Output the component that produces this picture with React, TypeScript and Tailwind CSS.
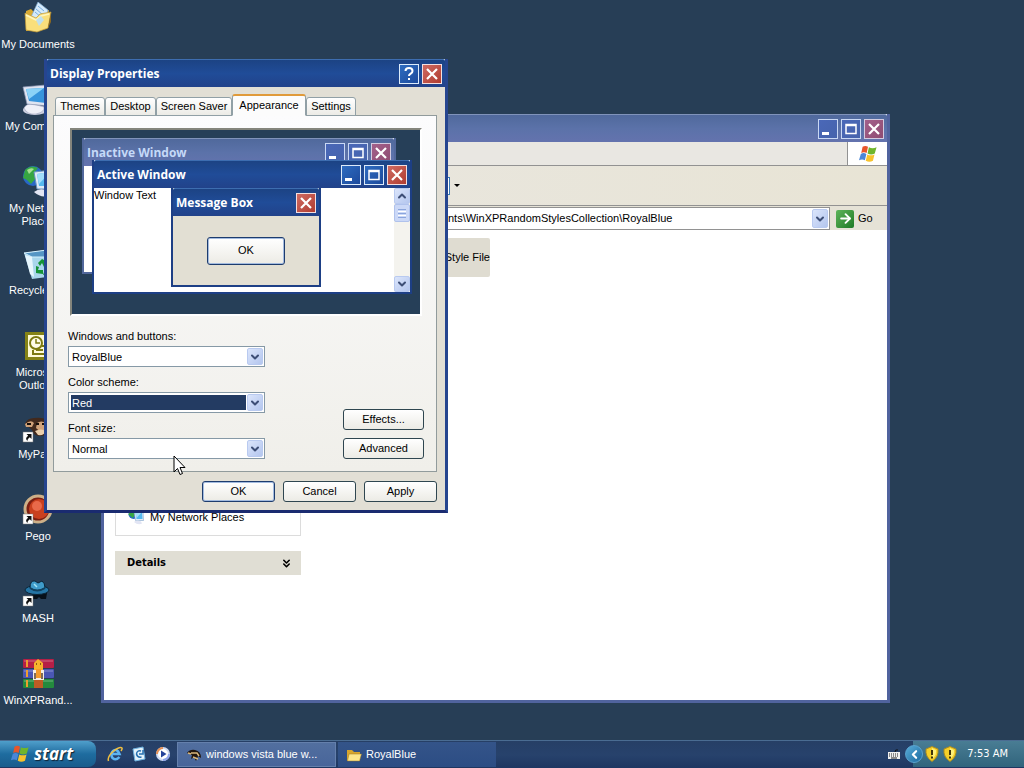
import React, { useState } from 'react';
import { ChevronDown, ChevronLeft, ChevronUp, ChevronsDown, ArrowRight } from 'lucide-react';

const Flag = ({ className }: { className: string }) => (
  <svg viewBox="0 0 22 20" className={className}>
    <path d="M5 2 Q8 0 11 2 L9.500 9 Q6.500 7 3.500 9 Z" fill="#e8562a" />
    <path d="M12 2.500 Q16 4.500 20.500 2.500 L18.500 9.500 Q14.500 11.500 10.500 9.500 Z" fill="#6fb52c" />
    <path d="M3 10 Q6 8 9.200 10 L7.500 17 Q4.500 15 1 17 Z" fill="#4a86d8" />
    <path d="M10.200 10.500 Q14 12.500 18.200 10.500 L16.500 17.500 Q12.500 19.500 8.500 17.500 Z" fill="#f7c22c" />
  </svg>
);

const Shortcut = () => (
  <g>
    <rect x="1" y="20" width="10" height="10" fill="#fff" stroke="#777" strokeWidth=".5" />
    <path d="M4.500 22 h5 v5 l-1.700 -1.700 q-2.500 1.500 -2.500 3.700 q-2.800 -3 .900 -5.300 Z" fill="#111" />
  </g>
);

const DocumentsIcon = () => (
  <svg viewBox="0 0 32 32" className="size-8">
    <path d="M4 9 L9 7 L12 10 L27 8 L25 27 L4 29 Z" fill="#d9aa33" />
    <path d="M16 0 L26 8 L23 20 L9 15 Z" fill="#d5eafb" stroke="#82add3" strokeWidth=".7" />
    <path d="M16 4 l6 5 M14 7 l7 6 M13 10 l6 5" stroke="#77aee0" strokeWidth="1" />
    <path d="M3 11 L14 16 L18 12 L29 10 L26 26 L15 30 L4 28 Z" fill="#f9df7c" stroke="#c39a35" strokeWidth=".7" />
    <path d="M4 13 L14 18 L19 14 L27 12" fill="none" stroke="#fff5bd" strokeWidth="1.500" />
    <path d="M14 18 l5 -4 3 4 -5 6 Z" fill="#bfe0ef" />
    <path d="M26 26 L29 10 L29 20 Z" fill="#8b6820" />
  </svg>
);

const ComputerIcon = () => (
  <svg viewBox="0 0 32 32" className="size-8">
    <ellipse cx="13" cy="26" rx="12" ry="5" fill="#cdd0e0" />
    <path d="M2 24 q3 -5 9 -4 l11 3 q1 5 -8 7 q-9 1 -12 -6" fill="#eff0f8" stroke="#9ea3bd" strokeWidth=".6" />
    <path d="M1 3 L24 1 L27 22 L5 20 Z" fill="#dfe4f1" stroke="#8d97b5" strokeWidth=".7" />
    <path d="M4 5 L22 4 L24 19 L7 17 Z" fill="#3694dc" />
    <path d="M4 5 L22 4 L7 15 Z" fill="#8bd2f7" />
  </svg>
);

const NetworkIcon = () => (
  <svg viewBox="0 0 32 32" className="size-full">
    <circle cx="11" cy="10" r="10" fill="#2868c8" />
    <path d="M3 4 Q9 -2 16 2 L12 7 L15 11 L9 18 L5 14 L1 12 Z" fill="#36a642" />
    <path d="M5 4 q4 -3 7 -1 l-5 5 Z" fill="#a4df91" />
    <path d="M12 6 L30 4 L31 23 L15 23 Z" fill="#dfebf8" stroke="#6793bf" />
    <path d="M15 8 L28 6 L29 20 L17 20 Z" fill="#55b9ef" />
    <path d="M15 8 L28 6 L17 18 Z" fill="#a1ddfa" />
    <path d="M12 26 q6 -5 14 -1 l2 4 q-8 4 -16 -3" fill="#e2e5f4" />
  </svg>
);

const RecycleIcon = () => (
  <svg viewBox="0 0 32 32" className="size-8">
    <path d="M2 5 L25 2 L29 9 L25 29 L10 31 Z" fill="#a9d6ec" />
    <path d="M2 5 L25 2 L29 9 L10 9 Z" fill="#5595c4" stroke="#d5effb" />
    <path d="M3 7 L10 9 L12 29 L8 26 Z" fill="#e7f6fd" />
    <path d="M16 15 l4 -4 6 3 -3 1 2 4 -3 0 -2 -4 -2 3 Z M14 18 l3 1 -1 3 5 0 v4 l-7 -1 Z M23 21 l4 -1 -2 6 -4 1 Z" fill="#159337" />
  </svg>
);

const OutlookIcon = () => (
  <svg viewBox="0 0 32 32" className="size-8">
    <rect x="3" y="2" width="28" height="28" fill="#858316" />
    <rect x="6" y="5" width="22" height="22" fill="#fffbd8" />
    <circle cx="14" cy="13" r="6" fill="#fffbe9" stroke="#7d7a10" strokeWidth="2" />
    <path d="M14 9 v4 h4" fill="none" stroke="#7d7a10" strokeWidth="1.500" />
    <path d="M11 20 v4 h14 v-8 h-5 M14 20 h7" fill="none" stroke="#7d7a10" strokeWidth="2" />
  </svg>
);

const MonkeyIcon = () => (
  <svg viewBox="0 0 32 32" className="size-8">
    <path d="M3 12 Q5 6 12 6 Q26 4 29 14 Q29 24 18 24 Q12 24 10 18 Z" fill="#42291c" />
    <path d="M3 12 Q9 7 12 11 L10 15 L4 15 Z M15 11 Q19 8 24 11 L23 18 Q18 21 14 16 Z" fill="#d0a279" />
    <path d="M13 19 Q19 16 24 19 Q22 24 16 23 Z" fill="#ecd0ac" />
    <path d="M14 12 h3 M20 12 h2 M5 12 h4" stroke="#160e0a" strokeWidth="2" />
    <Shortcut />
  </svg>
);

const PegoIcon = () => (
  <svg viewBox="0 0 32 32" className="size-8">
    <circle cx="16" cy="15" r="13" fill="#7c1f12" stroke="#cdb088" strokeWidth="3" />
    <circle cx="17" cy="15" r="10" fill="#c9401f" />
    <circle cx="15" cy="12" r="5" fill="#e8694a" />
    <Shortcut />
  </svg>
);

const MashIcon = () => (
  <svg viewBox="0 0 32 32" className="size-8">
    <path d="M10 17 h15 l-1 6 h-5 l-2 -2 -2 2 h-4 Z" fill="#071019" />
    <ellipse cx="15" cy="14" rx="12" ry="4.500" fill="#2575a5" stroke="#0b2436" />
    <path d="M8 12 Q8 4 13 5 L16 7 L20 5 Q23 7 23 12 Q15 17 8 12" fill="#3f9bc9" stroke="#0b2436" />
    <path d="M8 12 Q15 17 23 12" fill="none" stroke="#114260" strokeWidth="2" />
    <path d="M12 8 l3 3" stroke="#a4e4f5" strokeWidth="1.500" />
    <Shortcut />
  </svg>
);

const RarIcon = () => (
  <svg viewBox="0 0 32 32" className="size-8">
    <rect x="1" y="1" width="31" height="9" rx="1" fill="#b51f46" />
    <rect x="1" y="11" width="31" height="9" rx="1" fill="#4a56b4" />
    <rect x="1" y="21" width="31" height="9" rx="1" fill="#248a3d" />
    <path d="M2 3 h29 M2 13 h29 M2 23 h29" stroke="#fff" strokeOpacity=".35" />
    <path d="M5 2 v7 M5 12 v7 M5 22 v7" stroke="#ee9d2e" strokeWidth="2" />
    <path d="M12 5 l4 -4 5 4 v9 h-9 Z" fill="#f6b22e" />
    <rect x="11" y="12" width="11" height="10" fill="#f5efe4" />
    <path d="M13 15 v6 M20 15 v6" stroke="#57412d" strokeWidth="1.500" />
    <path d="M14 11 h5 v9 h-5 Z" fill="#f29b2b" />
    <rect x="12" y="22" width="9" height="8" fill="#bd5c25" />
    <path d="M14 6 h1 M18 6 h1" stroke="#6b3e0c" strokeWidth="1.500" />
  </svg>
);

const desktopIcons = [
  { name: 'My Documents', icon: <DocumentsIcon /> },
  { name: 'My Computer', icon: <ComputerIcon /> },
  { name: 'My Network Places', icon: <NetworkIcon /> },
  { name: 'Recycle Bin', icon: <RecycleIcon /> },
  { name: 'Microsoft Outlook', icon: <OutlookIcon /> },
  { name: 'MyPaint', icon: <MonkeyIcon /> },
  { name: 'Pego', icon: <PegoIcon /> },
  { name: 'MASH', icon: <MashIcon /> },
  { name: 'WinXPRand...', icon: <RarIcon /> },
];

type Kind = 'min' | 'max' | 'close' | 'help';

const captionColors = {
  active: 'border-[#dcebfa] bg-linear-to-br from-[#2e6cc0] to-[#1d4a9c]',
  inactive: 'border-[#c9d8f4] bg-linear-to-br from-[#4a68b8] to-[#4663ac]',
  activeClose: 'border-[#f3dfe0] bg-linear-to-br from-[#cf6a62] to-[#b03c30]',
  inactiveClose: 'border-[#d3cbe0] bg-linear-to-br from-[#a3618b] to-[#8f4b72]',
};

const CaptionButton = ({ kind, inactive }: { kind: Kind; inactive?: boolean }) => {
  const color =
    kind === 'close'
      ? inactive ? captionColors.inactiveClose : captionColors.activeClose
      : inactive ? captionColors.inactive : captionColors.active;
  return (
    <button type="button" aria-label={kind} className={`size-5 shrink-0 border ${color}`}>
      <svg viewBox="0 0 18 18" className="size-full" fill="none" stroke="#fff" strokeWidth="2">
        {kind === 'min' && <path d="M3 13.500 h7" strokeWidth="3" />}
        {kind === 'max' && <path d="M4 4.500 h10 v9 h-10 Z M4 5.500 h10" strokeWidth="1.500" />}
        {kind === 'close' && <path d="M4 4 l10 10 M14 4 l-10 10" strokeWidth="2.200" />}
        {kind === 'help' && <path d="M5.500 6 q0 -3 3.500 -3 t3.500 3 q0 1.500 -1.800 2.700 t-1.700 2.300 M9 13 v2" />}
      </svg>
    </button>
  );
};

interface TitleBarProps {
  title?: string;
  kinds: Kind[];
  inactive?: boolean;
}

const TitleBar = ({ title, kinds, inactive }: TitleBarProps) => (
  <div
    className={`flex h-7 shrink-0 items-center gap-[3px] rounded-t-xs border-t pr-[3px] ${
      inactive
        ? 'border-[#8093ba] bg-linear-to-b from-[#50699c] via-[#5b72a9] to-[#6473ae] text-[#c5d9f8]'
        : 'border-[#3d6db0] bg-linear-to-b from-[#1c4384] via-[#204c98] to-[#21428a] text-white'
    }`}
  >
    <h2 className="flex-1 truncate pl-[3px] font-['Open_Sans',sans-serif] text-[12px] font-bold">{title}</h2>
    {kinds.map((k) => (
      <CaptionButton key={k} kind={k} inactive={inactive} />
    ))}
  </div>
);

const Arrow = ({ up }: { up?: boolean }) => (
  <span className="flex w-4 shrink-0 items-center justify-center rounded-xs border border-[#b9caf0] bg-linear-to-br from-[#dbe5fb] to-[#b4c6ee] text-[#3d4e76]">
    {up ? <ChevronUp size={12} strokeWidth={4} /> : <ChevronDown size={12} strokeWidth={4} />}
  </span>
);

interface ComboProps {
  id: string;
  label: string;
  value: string;
  focused?: boolean;
}

const Combo = ({ id, label, value, focused }: ComboProps) => (
  <div className="flex flex-col gap-0.5">
    <label htmlFor={id} className="leading-4">{label}</label>
    <div className="flex h-[21px] border border-[#8699a6] bg-white p-px">
      <select
        id={id}
        defaultValue={value}
        className={`m-px flex-1 appearance-none pl-px leading-4 outline-none ${focused ? 'bg-[#233b62] text-white' : 'bg-white'}`}
      >
        <option>{value}</option>
      </select>
      <Arrow />
    </div>
  </div>
);

const PushButton = ({ label, className, primary }: { label: string; className: string; primary?: boolean }) => (
  <button
    type="button"
    className={`rounded-[3px] border bg-linear-to-b from-white to-[#ecebe5] text-center ${
      primary ? 'border-[#1d3c6e] shadow-[inset_0_0_0_1px_#a3bbdf]' : 'border-[#2f4650]'
    } ${className}`}
  >
    {label}
  </button>
);

const tabs = ['Themes', 'Desktop', 'Screen Saver', 'Appearance', 'Settings'];
const tabWidths = ['w-[50px]', 'w-[51px]', 'w-[76px]', 'w-[74px]', 'w-[50px]'];

const Preview = () => (
  <div className="relative h-[188px] overflow-hidden border-2 border-t-[#84857c] border-r-white border-b-white border-l-[#84857c] bg-[#263f58]">
    <div className="absolute top-2 left-2.5 flex h-[136px] w-[314px] flex-col border-2 border-t-0 border-[#52689c] bg-white">
      <TitleBar title="Inactive Window" kinds={['min', 'max', 'close']} inactive />
    </div>
    <div className="absolute top-[30px] left-5 flex h-[134px] w-[320px] flex-col border-2 border-t-0 border-[#1d3f85] bg-white">
      <TitleBar title="Active Window" kinds={['min', 'max', 'close']} />
      <div className="flex flex-1">
        <p className="flex-1 leading-[14px]">Window Text</p>
        <div className="flex w-4 flex-col bg-[#f4f3ee]">
          <div className="flex h-4"><Arrow up /></div>
          <div className="flex h-[18px] flex-col items-center justify-center gap-px rounded-xs border border-[#b0c2ec] bg-[#cbd8f7]">
            <i className="h-px w-2 bg-[#8ba5dc]" />
            <i className="h-px w-2 bg-white" />
            <i className="h-px w-2 bg-[#8ba5dc]" />
            <i className="h-px w-2 bg-white" />
            <i className="h-px w-2 bg-[#8ba5dc]" />
          </div>
          <div className="mt-auto flex h-4"><Arrow /></div>
        </div>
      </div>
    </div>
    <div className="absolute top-[58px] left-[99px] flex h-[99px] w-[150px] flex-col border-2 border-t-0 border-[#1d3f85] bg-[#e2dfd3]">
      <TitleBar title="Message Box" kinds={['close']} />
      <div className="flex flex-1 items-center justify-center">
        <PushButton label="OK" primary className="h-7 w-[78px]" />
      </div>
    </div>
  </div>
);

const DisplayProperties = () => {
  const [tab, setTab] = useState('Appearance');

  return (
    <section className="absolute top-[59px] left-11 flex w-[404px] flex-col border-3 border-t-0 border-[#26458f] border-b-[#1a2b70] bg-[#e2dfd5]">
      <TitleBar title="Display Properties" kinds={['help', 'close']} />
      <div className="flex flex-col pt-[7px] pr-2 pb-2 pl-1.5">
        <div role="tablist" className="relative z-10 -mb-px flex items-end pl-0.5">
          {tabs.map((t, i) => (
            <button
              key={t}
              type="button"
              role="tab"
              aria-selected={t === tab}
              onClick={() => setTab(t)}
              className={`rounded-t-[3px] border whitespace-nowrap ${tabWidths[i]} ${
                t === tab
                  ? 'h-[22px] border-t-2 border-[#91a0a6] border-t-[#e09a3a] border-b-[#fcfcfc] bg-[#fcfcfc]'
                  : 'h-[19px] border-[#91a0a6] bg-linear-to-b from-white to-[#ecebe6]'
              }`}
            >
              {t}
            </button>
          ))}
        </div>
        <div className="border border-[#919b9c] bg-linear-to-b from-[#fcfcfd] to-[#f0efea] pt-3 pr-3.5 pb-3 pl-4">
          <Preview />
          <div className="mt-3 flex items-end justify-between">
            <div className="-ml-0.5 flex w-[197px] flex-col gap-[7px]">
              <Combo id="windows" label="Windows and buttons:" value="RoyalBlue" />
              <Combo id="scheme" label="Color scheme:" value="Red" focused />
              <Combo id="font" label="Font size:" value="Normal" />
            </div>
            <div className="-mr-0.5 flex flex-col gap-2">
              <PushButton label="Effects..." className="h-[21px] w-[81px]" />
              <PushButton label="Advanced" className="h-[21px] w-[81px]" />
            </div>
          </div>
        </div>
        <div className="mt-[9px] flex justify-end gap-2">
          <PushButton label="OK" primary className="h-[21px] w-[73px]" />
          <PushButton label="Cancel" className="h-[21px] w-[73px]" />
          <PushButton label="Apply" className="h-[21px] w-[73px]" />
        </div>
      </div>
    </section>
  );
};

const Explorer = () => (
  <section className="absolute top-[114px] left-[101px] flex h-[589px] w-[789px] flex-col border-3 border-t-0 border-[#50639e] bg-white">
    <TitleBar kinds={['min', 'max', 'close']} inactive />
    <div className="flex h-6 shrink-0 border-b border-[#929292] bg-[#e9e7e2]">
      <div className="ml-auto flex w-10 items-center justify-center border-l border-[#929292] bg-white">
        <Flag className="h-[18px] w-5" />
      </div>
    </div>
    <div className="flex h-10 shrink-0 items-center gap-1 border-b border-[#929292] bg-linear-to-r from-[#e9e7e2] to-[#e8e4d5] pl-[325px]">
      <span className="h-[18px] w-[21px] border border-[#3878b4] bg-white" />
      <svg viewBox="0 0 6 4" className="h-1 w-1.5"><path d="M0 0 h6 l-3 3 Z" fill="#000" /></svg>
    </div>
    <div className="flex h-6 shrink-0 items-center bg-[#e5e2d6] pt-px">
      <div className="flex h-full flex-1 border border-[#929292] bg-white p-px">
        <input
          aria-label="Address"
          defaultValue="nts\WinXPRandomStylesCollection\RoyalBlue"
          className="flex-1 pl-[342px] outline-none"
        />
        <Arrow />
      </div>
      <button type="button" className="flex w-[57px] items-center gap-1 pl-1.5">
        <span className="flex size-[18px] items-center justify-center rounded-xs bg-linear-to-br from-[#5db55a] to-[#1c7a26] text-white">
          <ArrowRight size={15} strokeWidth={3} />
        </span>
        Go
      </button>
    </div>
    <div className="flex flex-1">
      <aside className="w-[197px] shrink-0 pt-2 pl-[11px]">
        <div className="flex h-[298px] flex-col justify-end border border-[#dcdcdc] px-3 pb-2.5">
          <a href="#network" className="flex items-center gap-1.5 leading-4">
            <span className="size-4"><NetworkIcon /></span>
            My Network Places
          </a>
        </div>
        <div className="mt-[15px] flex h-6 items-center justify-between bg-[#e0ded4] pr-2 pl-3">
          <h3 className="font-['DejaVu_Sans_Condensed',sans-serif] font-bold">Details</h3>
          <ChevronsDown size={13} strokeWidth={3} />
        </div>
      </aside>
      <div className="pt-2">
        <div className="flex h-[39px] w-[189px] items-center justify-end rounded-xs bg-[#dfdcd1]">Style File</div>
      </div>
    </div>
  </section>
);

const Shield = () => (
  <svg viewBox="0 0 14 16" className="h-4 w-3.5">
    <path d="M7 .5 L13 3 Q14 11 7 15.500 Q0 11 1 3 Z" fill="#f5cf28" stroke="#a88b23" />
    <path d="M7 2 L11 4 Q12 9 7 13 Z" fill="#fff07a" />
    <path d="M7 4 v5 M7 10.500 v2" stroke="#40340a" strokeWidth="2" />
  </svg>
);

const Taskbar = () => (
  <footer className="flex h-[29px] shrink-0 border-t border-[#4a6c92] bg-linear-to-b from-[#263f66] via-[#27426c] to-[#1d3560] pb-0.5 text-white">
    <button
      type="button"
      className="flex w-24 items-center gap-1 rounded-r-lg bg-linear-to-b from-[#4f9fcb] via-[#1e6c9f] to-[#1a5c8c] pl-2.5 font-['Open_Sans',sans-serif] text-[17px] font-bold italic [text-shadow:1px_1px_1px_#123]"
    >
      <Flag className="h-5 w-5" />
      start
    </button>
    <nav className="flex w-[81px] items-center gap-2 pl-[11px]">
      <a href="#ie" aria-label="Internet Explorer">
        <svg viewBox="0 0 16 16" className="size-4">
          <path d="M12.500 11 Q9 15 5.500 12 Q3 8 6 5 Q10 2 12.500 8 H5" fill="none" stroke="#5db5f2" strokeWidth="2.500" />
          <path d="M1.500 15 Q0 11 6 5.500 Q13 0 15 2 Q15.500 3 14 5" fill="none" stroke="#f0bf40" strokeWidth="1.500" />
        </svg>
      </a>
      <a href="#desktop" aria-label="Show Desktop">
        <svg viewBox="0 0 16 16" className="size-4">
          <path d="M2 3 L12 1 L14 13 L4 15 Z" fill="#e3f2fb" stroke="#6eb1e0" />
          <path d="M10 5 q-4 -1 -4.500 3 q1 4 5 3 M8 8 h4 v-4" fill="none" stroke="#2870b0" strokeWidth="1.500" />
        </svg>
      </a>
      <a href="#media" aria-label="Media Player">
        <svg viewBox="0 0 16 16" className="size-4">
          <circle cx="8" cy="8" r="6" fill="#fff" stroke="#cfdaf2" strokeWidth="2" />
          <path d="M2 8 A6 6 0 0 1 8 2" fill="none" stroke="#e78f52" strokeWidth="2" />
          <path d="M14 8 A6 6 0 0 1 8 14" fill="none" stroke="#8fa5ed" strokeWidth="2" />
          <path d="M6 4.500 L11.500 8 L6 11.500 Z" fill="#24429a" />
        </svg>
      </a>
    </nav>
    <div className="flex flex-1 gap-0.5 pt-px">
      <button type="button" className="flex w-[159px] items-center gap-1 border border-[#6580ac] bg-linear-to-b from-[#526f9f] to-[#48659a] pl-2 whitespace-nowrap">
        <svg viewBox="0 0 16 16" className="size-4">
          <path d="M1 6 Q4 2 9 3 Q15 4 15 11 L12 9 L10 14 L8 10 L5 12 L6 8 Z" fill="#20140c" />
          <path d="M5 6 h6 l2 3 M7 10 l5 2 M2 6 l3 1" stroke="#d9b67b" strokeWidth="1.500" fill="none" />
        </svg>
        windows vista blue w...
      </button>
      <button type="button" className="flex w-[158px] items-center gap-1 bg-linear-to-b from-[#345489] to-[#2c4d84] pl-2">
        <svg viewBox="0 0 16 16" className="size-4">
          <path d="M1 3 h5 l2 2 h6 v9 h-13 Z" fill="#d7a52d" />
          <path d="M3 7 h12.500 l-2 7 h-12 Z" fill="#fde68a" stroke="#9b7620" strokeWidth=".5" />
        </svg>
        RoyalBlue
      </button>
    </div>
    <svg viewBox="0 0 14 12" className="mr-3 h-3 w-3.5 self-center">
      <path d="M8 4 q0 -3 3 -2" fill="none" stroke="#111" />
      <rect x="1" y="4" width="12" height="7" fill="#f0f0f0" />
      <path d="M2 6 h10 M2 8 h10" stroke="#222" strokeDasharray="1 1" />
      <path d="M4 10 h6" stroke="#222" />
    </svg>
    <div className="flex items-center gap-1 bg-linear-to-b from-[#497d94] to-[#31647c] pr-4">
      <button type="button" aria-label="Show hidden icons" className="-mr-0.5 -ml-2 flex size-[18px] items-center justify-center rounded-full border border-[#5aa3cf] bg-linear-to-br from-[#57acd8] to-[#1c6a9f]">
        <ChevronLeft size={13} strokeWidth={4} />
      </button>
      <Shield />
      <Shield />
      <time className="ml-1.5 font-['DejaVu_Sans_Condensed',sans-serif]">7:53 AM</time>
    </div>
  </footer>
);

const App: React.FC = () => (
  <main className="flex h-screen flex-col overflow-hidden bg-[#273e56] font-['Liberation_Sans',sans-serif] text-[11px] text-black">
    <div className="relative flex-1">
      <ul className="flex w-[76px] flex-col pt-0.5 text-white">
        {desktopIcons.map((d) => (
          <li key={d.name} className="flex h-[82px] flex-col items-center gap-1 text-center leading-[13px]">
            <span className="size-8 shrink-0">{d.icon}</span>
            {d.name}
          </li>
        ))}
      </ul>
      <Explorer />
      <DisplayProperties />
      {/* mouse pointer */}
      <svg viewBox="0 0 13 21" className="absolute top-[455px] left-[173px] h-[21px] w-[13px]">
        <path d="M1 1 V17 L4.500 13.500 L7 19.500 L9.500 18.500 L7 12.500 H12 Z" fill="#fff" stroke="#000" />
      </svg>
    </div>
    <Taskbar />
  </main>
);

export default App;
